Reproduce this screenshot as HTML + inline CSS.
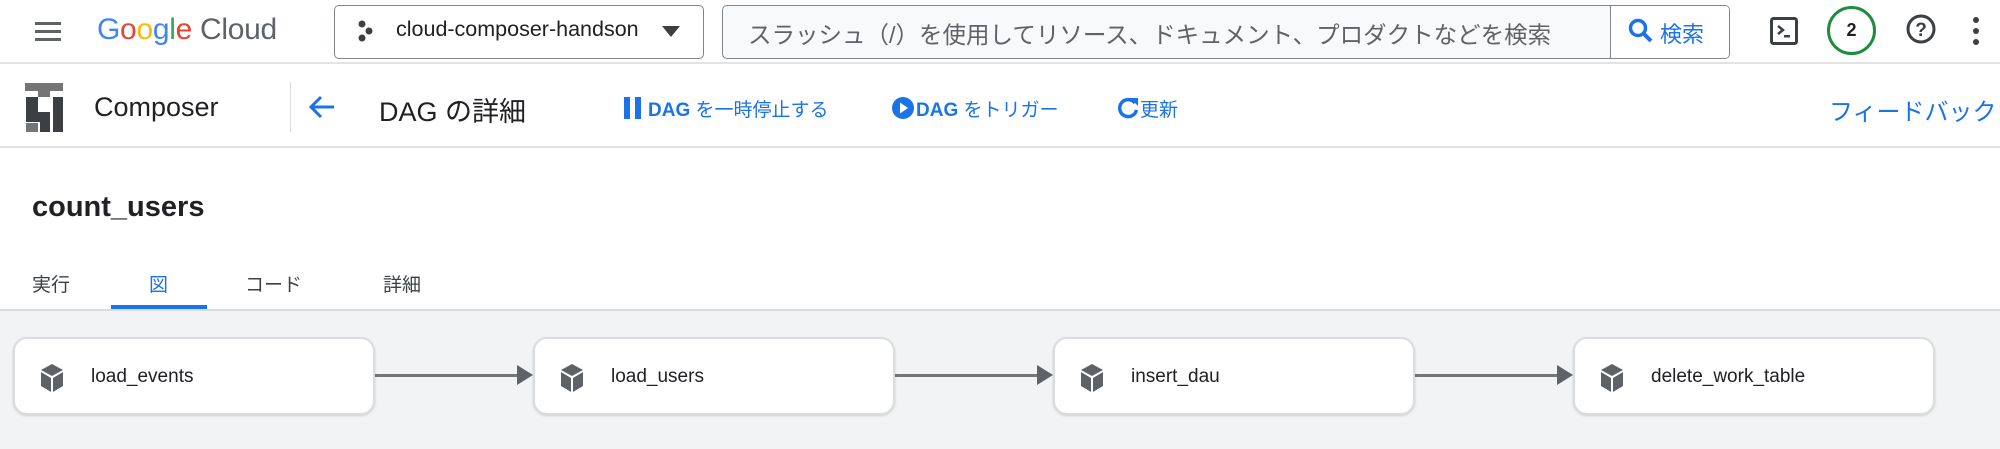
<!DOCTYPE html>
<html><head><meta charset="utf-8"><style>
*{margin:0;padding:0;box-sizing:border-box}
body{width:2000px;height:449px;overflow:hidden;background:#fff;font-family:"Liberation Sans","Noto Sans CJK JP",sans-serif;position:relative;color:#202124}
.a{position:absolute}
.blue{color:#1a73e8}
.node{position:absolute;top:337px;width:362px;height:78px;background:#fff;border:2px solid #dadce0;border-radius:14px;box-shadow:0 1px 2px rgba(0,0,0,.15)}
.node span{position:absolute;left:76px;top:27px;font-size:19px;color:#202124}
.node svg{position:absolute;left:24px;top:24px}
.edge{position:absolute;top:374px;height:3px;background:#757575}
.arr{position:absolute;top:365px;width:0;height:0;border-top:10px solid transparent;border-bottom:10px solid transparent;border-left:16px solid #5f6368}
</style></head><body>
<div class="a" style="left:0;top:0;width:2000px;height:64px;border-bottom:2px solid #e3e3e3"></div>
<svg class="a" style="left:35px;top:20px" width="26" height="22"><rect y="2" width="26" height="3" fill="#5f6368"/><rect y="10" width="26" height="3" fill="#5f6368"/><rect y="18" width="26" height="3" fill="#5f6368"/></svg>
<div class="a" style="left:97px;top:13px;font-size:30px;letter-spacing:-0.3px"><span style="color:#4285f4">G</span><span style="color:#ea4335">o</span><span style="color:#fbbc04">o</span><span style="color:#4285f4">g</span><span style="color:#34a853">l</span><span style="color:#ea4335">e</span> <span style="color:#5f6368">Cloud</span></div>
<div class="a" style="left:334px;top:5px;width:370px;height:54px;border:1.5px solid #80868b;border-radius:5px"></div>
<svg class="a" style="left:357px;top:20px" width="16" height="22"><circle cx="5" cy="4" r="3.5" fill="#3c4043"/><circle cx="12" cy="11" r="3.5" fill="#3c4043"/><circle cx="5" cy="18" r="3.5" fill="#3c4043"/></svg>
<div class="a" style="left:396px;top:17px;font-size:21.5px;color:#202124">cloud-composer-handson</div>
<svg class="a" style="left:662px;top:26px" width="18" height="11"><path d="M0 0H18L9 11Z" fill="#3c4043"/></svg>
<div class="a" style="left:722px;top:5px;width:1008px;height:54px;border:1.5px solid #80868b;border-radius:5px;background:#f8f9fa"></div>
<div class="a" style="left:1610px;top:6px;width:1px;height:52px;background:#80868b"></div>
<div class="a" style="left:1611px;top:6px;width:118px;height:52px;background:#fff;border-radius:0 4px 4px 0"></div>
<div class="a" style="left:748px;top:16px;font-size:23.5px;color:#5f6368;white-space:nowrap">スラッシュ（/）を使用してリソース、ドキュメント、プロダクトなどを検索</div>
<svg class="a" style="left:1628px;top:18px" width="26" height="28"><circle cx="10" cy="10" r="7.5" fill="none" stroke="#1a73e8" stroke-width="3.5"/><path d="M15.5 15.5L23 23" stroke="#1a73e8" stroke-width="4"/></svg>
<div class="a blue" style="left:1660px;top:17px;font-size:22px">検索</div>
<svg class="a" style="left:1770px;top:17px" width="28" height="28"><rect x="1.5" y="1.5" width="25" height="25" rx="2" fill="none" stroke="#3c4043" stroke-width="3"/><path d="M8 9L13 13L8 17" fill="none" stroke="#3c4043" stroke-width="2.5"/><rect x="14" y="18" width="6" height="2.5" fill="#3c4043"/></svg>
<div class="a" style="left:1827px;top:6px;width:49px;height:49px;border:3px solid #1e8e3e;border-radius:50%;text-align:center;line-height:43px;font-size:18px;font-weight:bold">2</div>
<svg class="a" style="left:1905px;top:13px" width="32" height="32"><circle cx="16" cy="16" r="13" fill="none" stroke="#3c4043" stroke-width="3"/><text x="16" y="23" font-size="19" font-weight="bold" text-anchor="middle" fill="#3c4043" font-family="Liberation Sans">?</text></svg>
<svg class="a" style="left:1970px;top:16px" width="12" height="30"><circle cx="6" cy="4" r="3" fill="#3c4043"/><circle cx="6" cy="15" r="3" fill="#3c4043"/><circle cx="6" cy="26" r="3" fill="#3c4043"/></svg>
<div class="a" style="left:0;top:146px;width:2000px;height:2px;background:#e3e3e3"></div>
<svg class="a" style="left:0;top:0" width="70" height="140"><rect x="25" y="83" width="38" height="8" fill="#757575"/><rect x="38" y="91" width="12" height="6" fill="#757575"/><rect x="26" y="97" width="12" height="25" fill="#3c4043"/><rect x="26" y="112" width="24" height="10" fill="#3c4043"/><rect x="40" y="112" width="10" height="20" fill="#3c4043"/><rect x="26" y="123" width="12" height="9" fill="#757575"/><rect x="53" y="97" width="10" height="35" fill="#3c4043"/></svg>
<div class="a" style="left:94px;top:92px;font-size:27px">Composer</div>
<div class="a" style="left:290px;top:82px;width:1px;height:50px;background:#dadce0"></div>
<svg class="a" style="left:308px;top:95px" width="28" height="24"><path d="M26 12H4M13 2L3 12L13 22" fill="none" stroke="#1a73e8" stroke-width="3"/></svg>
<div class="a" style="left:379px;top:90px;font-size:27px">DAG の詳細</div>
<svg class="a" style="left:624px;top:97px" width="18" height="22"><rect width="6" height="22" fill="#1a73e8"/><rect x="11" width="6" height="22" fill="#1a73e8"/></svg>
<div class="a blue" style="left:648px;top:95px;font-size:19px;font-weight:bold">DAG <span style="font-weight:normal">を一時停止する</span></div>
<svg class="a" style="left:892px;top:97px" width="22" height="22"><circle cx="11" cy="11" r="11" fill="#1a73e8"/><path d="M8 5.5L16 11L8 16.5Z" fill="#fff"/></svg>
<div class="a blue" style="left:916px;top:95px;font-size:19px;font-weight:bold">DAG <span style="font-weight:normal">をトリガー</span></div>
<svg class="a" style="left:1117px;top:96px" width="22" height="24"><path d="M18 7A8.5 8.5 0 1 0 19.5 14" fill="none" stroke="#1a73e8" stroke-width="3.5"/><path d="M13 2H21V10Z" fill="#1a73e8"/></svg>
<div class="a blue" style="left:1140px;top:95px;font-size:19px">更新</div>
<div class="a blue" style="left:1829px;top:92px;font-size:24px;white-space:nowrap">フィードバック</div>
<div class="a" style="left:32px;top:191px;font-size:29px;font-weight:bold">count_users</div>
<div class="a" style="left:32px;top:270px;font-size:19px;color:#3c4043">実行</div>
<div class="a blue" style="left:149px;top:270px;font-size:19px">図</div>
<div class="a" style="left:245px;top:270px;font-size:19px;color:#3c4043">コード</div>
<div class="a" style="left:383px;top:270px;font-size:19px;color:#3c4043">詳細</div>
<div class="a" style="left:111px;top:305px;width:96px;height:4px;background:#1a73e8"></div>
<div class="a" style="left:0;top:309px;width:2000px;height:140px;background:#f1f3f4;border-top:2px solid #dadce0"></div>
<div class="edge" style="left:375px;width:142px"></div><div class="arr" style="left:517px"></div>
<div class="edge" style="left:895px;width:142px"></div><div class="arr" style="left:1037px"></div>
<div class="edge" style="left:1415px;width:142px"></div><div class="arr" style="left:1557px"></div>
<div class="node" style="left:13px"><svg width="26" height="30" viewBox="0 0 26 30"><path d="M13 1L24 7L13 13L2 7Z" fill="#5f6368"/><path d="M2 9L12 15V29L2 23Z" fill="#5f6368"/><path d="M24 9L14 15V29L24 23Z" fill="#5f6368"/></svg><span>load_events</span></div>
<div class="node" style="left:533px"><svg width="26" height="30" viewBox="0 0 26 30"><path d="M13 1L24 7L13 13L2 7Z" fill="#5f6368"/><path d="M2 9L12 15V29L2 23Z" fill="#5f6368"/><path d="M24 9L14 15V29L24 23Z" fill="#5f6368"/></svg><span>load_users</span></div>
<div class="node" style="left:1053px"><svg width="26" height="30" viewBox="0 0 26 30"><path d="M13 1L24 7L13 13L2 7Z" fill="#5f6368"/><path d="M2 9L12 15V29L2 23Z" fill="#5f6368"/><path d="M24 9L14 15V29L24 23Z" fill="#5f6368"/></svg><span>insert_dau</span></div>
<div class="node" style="left:1573px"><svg width="26" height="30" viewBox="0 0 26 30"><path d="M13 1L24 7L13 13L2 7Z" fill="#5f6368"/><path d="M2 9L12 15V29L2 23Z" fill="#5f6368"/><path d="M24 9L14 15V29L24 23Z" fill="#5f6368"/></svg><span>delete_work_table</span></div>
</body></html>
